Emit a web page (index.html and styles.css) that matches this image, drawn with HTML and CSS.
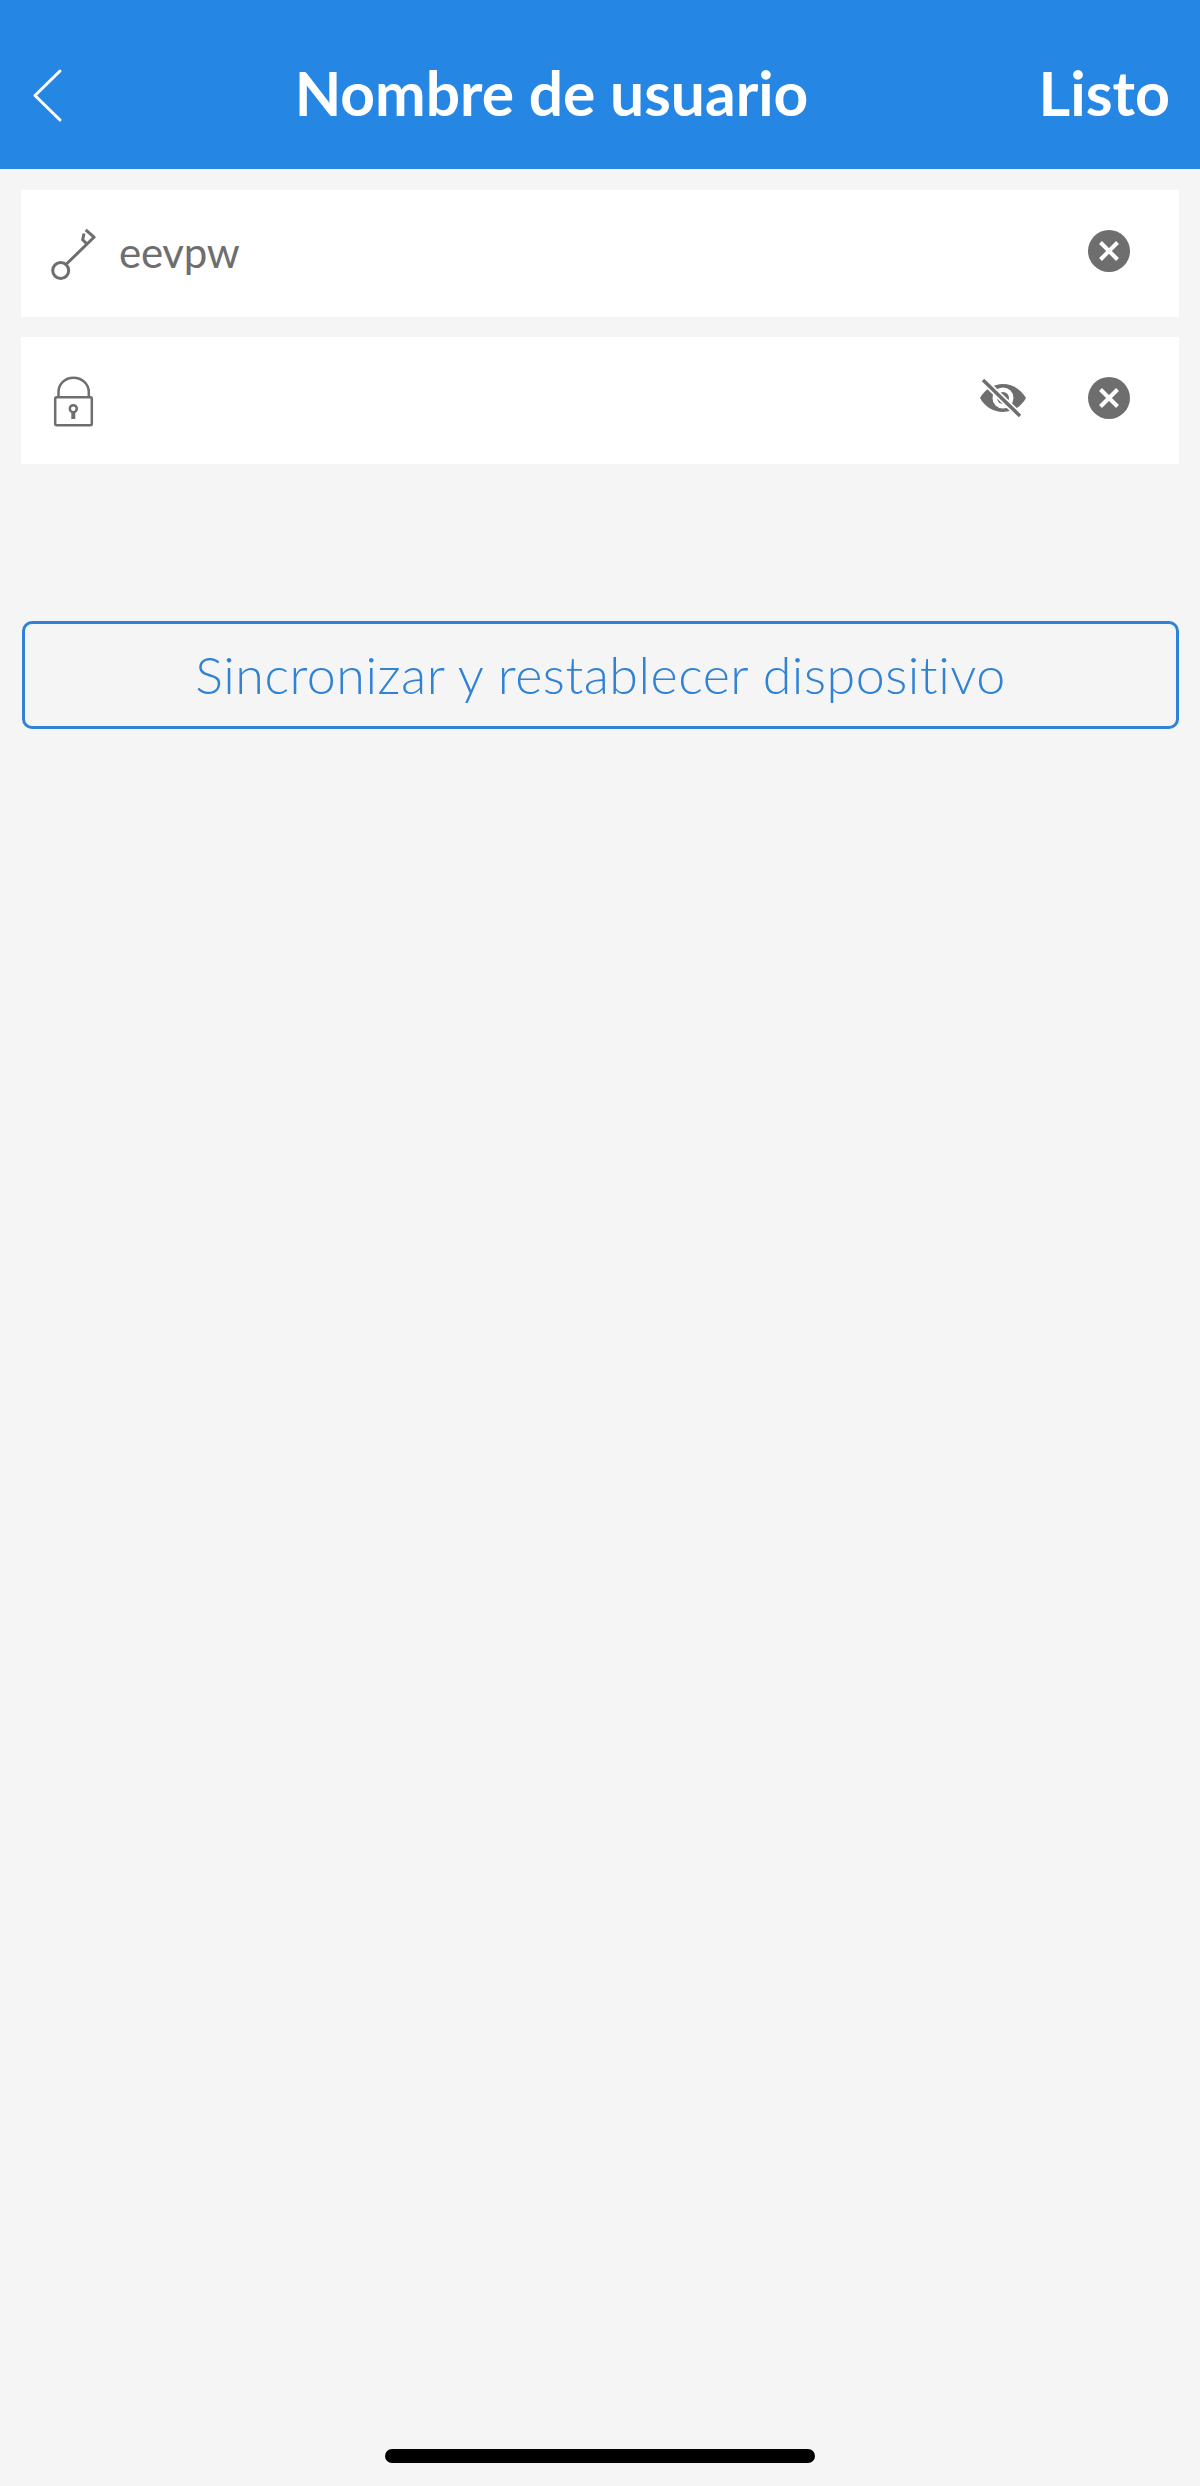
FILE: index.html
```html
<!DOCTYPE html>
<html>
  <head>
    <meta charset="UTF-8" />
    <title>Nombre de usuario</title>
    <link rel="stylesheet" href="styles.css">
  </head>
  <body>
    <header class="nav-bar">
      <svg class="back-icon" viewBox="0 0 32 56" fill="none" xmlns="http://www.w3.org/2000/svg">
        <path d="M29 3L4 27.500L29 52" stroke="currentColor" stroke-width="3" stroke-linecap="round" stroke-linejoin="round" />
      </svg>
      <h1 class="nav-title">Nombre de usuario</h1>
      <span class="nav-action">Listo</span>
    </header>

    <main class="content">
      <div class="field">
        <svg class="field-icon" viewBox="0 0 50 60" fill="none" xmlns="http://www.w3.org/2000/svg">
          <circle cx="12.700" cy="46.500" r="8" stroke="currentColor" stroke-width="3" />
          <path d="M18.700 39.800L47 12.200M38.700 19.800L34.700 15.800L36 9.500M37.700 5.800L46 13.200" stroke="currentColor" stroke-width="3" />
        </svg>
        <span class="field-value">eevpw</span>
        <svg class="clear-icon" viewBox="0 0 42 42" xmlns="http://www.w3.org/2000/svg">
          <circle cx="21" cy="21" r="21" fill="currentColor" />
          <path d="M12.500 12.500L29.500 29.500M29.500 12.500L12.500 29.500" stroke="#fff" stroke-width="4" />
        </svg>
      </div>

      <div class="field">
        <svg class="field-icon" viewBox="0 0 50 60" fill="none" xmlns="http://www.w3.org/2000/svg">
          <path d="M10.500 26V21C10.500 13 17 6.700 25.500 6.700C34 6.700 40.800 13 40.800 21V26" stroke="currentColor" stroke-width="2.500" />
          <rect x="7.200" y="26.200" width="36.600" height="28" rx="1.500" stroke="currentColor" stroke-width="2.500" />
          <circle cx="25.300" cy="37.700" r="3.500" stroke="currentColor" stroke-width="2.500" />
          <path d="M25.300 41V48" stroke="currentColor" stroke-width="4" />
        </svg>
        <svg class="eye-icon" viewBox="0 0 46 38" xmlns="http://www.w3.org/2000/svg">
          <path d="M0 19C5 10 14 5 23 5C32 5 41 10 46 19C41 28 32 33 23 33C14 33 5 28 0 19Z" fill="currentColor" />
          <circle cx="23" cy="19" r="10.500" fill="#fff" />
          <circle cx="23" cy="19" r="6" fill="currentColor" />
          <path d="M3 1L40 37" stroke="#fff" stroke-width="7" />
          <path d="M3 1L40 37" stroke="currentColor" stroke-width="3.500" />
        </svg>
        <svg class="clear-icon" viewBox="0 0 42 42" xmlns="http://www.w3.org/2000/svg">
          <circle cx="21" cy="21" r="21" fill="currentColor" />
          <path d="M12.500 12.500L29.500 29.500M29.500 12.500L12.500 29.500" stroke="#fff" stroke-width="4" />
        </svg>
      </div>

      <button class="sync-button">Sincronizar y restablecer dispositivo</button>
    </main>

    <div class="home-indicator"></div>
  </body>
</html>
```

FILE: styles.css
```css
:root {
  --primary: #2686e4;
  --outline: #2f82d6;
  --bg: #f5f5f5;
  --gray: #6e6e6e;
}

* {
  margin: 0;
  padding: 0;
  box-sizing: border-box;
}

body {
  font-family: Lato, "Open Sans", sans-serif;
  background-color: var(--bg);
  color: var(--gray);
  height: 100vh;
  display: flex;
  flex-direction: column;
  overflow: hidden;
}

.nav-bar {
  height: 169px;
  flex-shrink: 0;
  background-color: var(--primary);
  color: #fff;
  display: grid;
  grid-template-columns: 1fr auto 1fr;
  align-items: center;
  padding: 22px 30px 0 31px;
}

.back-icon {
  width: 32px;
  height: 56px;
}

.nav-title {
  font-size: 60.500px;
  font-weight: 700;
  line-height: 1;
  margin-top: -4px;
  margin-right: 98px;
}

.nav-action {
  font-size: 61px;
  font-weight: 700;
  line-height: 1;
  justify-self: end;
  margin-top: -6px;
}

.content {
  flex: 1;
  padding: 21px 21px 0;
  display: flex;
  flex-direction: column;
  gap: 20px;
}

.field {
  height: 127px;
  background-color: #fff;
  display: flex;
  align-items: center;
  padding: 0 49px 0 27px;
}

.field-icon {
  width: 50px;
  height: 60px;
  margin-right: 21px;
}

.field-value {
  font-size: 42px;
  letter-spacing: -0.300px;
  line-height: 1;
  flex: 1;
  margin-top: -4px;
}

.eye-icon {
  width: 46px;
  height: 38px;
  margin-left: auto;
  margin-right: 62px;
  margin-top: -5px;
}

.clear-icon {
  width: 42px;
  height: 42px;
  margin-top: -6px;
}

.sync-button {
  height: 108px;
  margin-top: 137px;
  margin-left: 1px;
  padding-bottom: 2px;
  background: transparent;
  border: 3px solid var(--outline);
  border-radius: 10px;
  color: var(--outline);
  font-family: inherit;
  font-size: 52px;
  font-weight: 300;
  letter-spacing: 0.500px;
}

.home-indicator {
  width: 430px;
  height: 14px;
  flex-shrink: 0;
  margin: 0 auto 23px;
  background-color: #000;
  border-radius: 7px;
}
```
